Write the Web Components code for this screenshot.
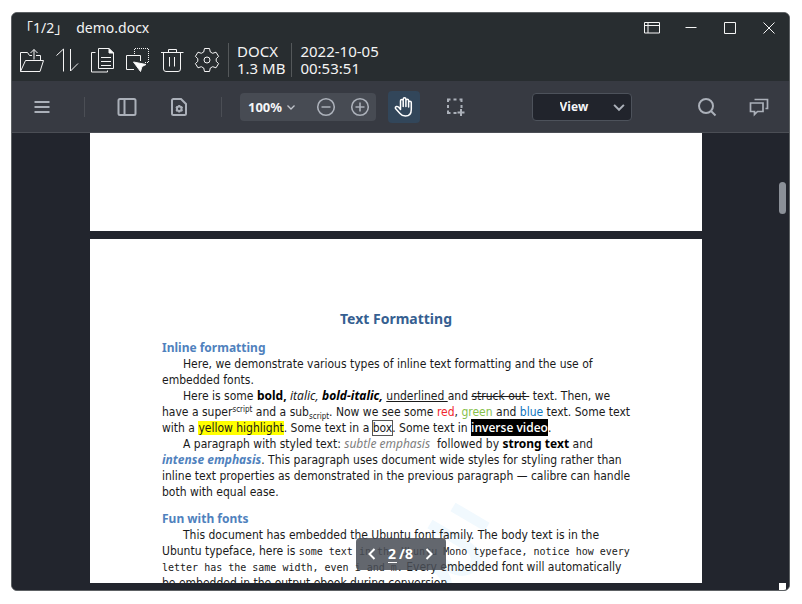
<!DOCTYPE html>
<html lang="en">
<head>
<meta charset="utf-8">
<title>demo.docx</title>
<style>
html, body { margin: 0; height: 100%; background: #fff; }
body { font-family: "Noto Sans", "Noto Sans CJK JP", sans-serif; }
</style>
</head>
<body>
<viewer-window></viewer-window>

<script>
const define = (name, html) => {
  const template = document.createElement('template');
  template.innerHTML = html;
  customElements.define(name, class extends HTMLElement {
    constructor() {
      super();
      this.attachShadow({ mode: 'open' }).append(template.content.cloneNode(true));
    }
  });
};

const ICONS = {
  open: [26, '<path d="M1.5 24.5V5.500h7l2 3h2.500M17 8.500h4.500v5M1.500 24.500h19.500L24.500 13.500H6.500Z M15 12.500V2.500M11.500 6L15 2.500L18.500 6"/>'],
  sort: [26, '<path d="M2.500 8.500L9.500 2V24.500M16.500 2V24L24 16.500"/>'],
  copy: [26, '<path d="M9.500 1.500H20L24.500 6V21.500H9.500ZM12 10.500h10M12 14.500h10M12 18.500h10M6.500 5.500H2.500V25H18.500V23.500"/><path d="M20 1.500V6H24.500Z" fill="#fff"/>'],
  move: [26, '<path d="M10.500 7V1.500H24.500V15.500H20" stroke-dasharray="1 1"/><path d="M10 22.500H2.500V8.500H16.500V14"/><path d="M9.500 15L22 17.500L18 19.500L16.500 24.500Z" fill="#fff"/>'],
  trash: [26, '<path d="M2 5.500H24.500M9.500 5.500V2.500H17.500V5.500M4.500 5.500V22Q4.500 24.500 7 24.500H19Q21.500 24.500 21.500 22V5.500M10.500 10V19.500M15.500 10V19.500"/>'],
  settings: [26, '<circle cx="13" cy="13" r="3"/><path d="M10.500 1.500h5l.8 3.500 2.400 1.300 3.300-1.100 2.600 4.200-2.400 2.300v2.600l2.400 2.300-2.600 4.200-3.300-1.100-2.400 1.300-.8 3.500h-5l-.8-3.500-2.400-1.300L4 20.800l-2.600-4.200 2.400-2.300v-2.600L1.400 9.400 4 5.200l3.300 1.100L9.700 5Z"/>'],
  layout: [16, '<path d="M.5 2.500h15v10.500H.5ZM.5 5.500h15M4 2.500v10.500"/>'],
  minimize: [16, '<path d="M2.500 7.500h11"/>'],
  maximize: [16, '<path d="M2.500 2.500h11v11h-11Z"/>'],
  close: [16, '<path d="M2.500 2.500L13.500 13.500M13.500 2.500L2.500 13.500"/>'],
  menu: [20, '<path d="M2.500 5h15M2.500 10h15M2.500 15h15"/>'],
  panel: [20, '<rect x="1.500" y="2" width="17" height="16" rx="1.500"/><path d="M7.500 2v16"/>'],
  page: [20, '<path d="M3 3.500Q3 2 4.500 2H12L17 7V16.500Q17 18 15.500 18H4.500Q3 18 3 16.500Z"/><circle cx="10.200" cy="11.800" r="2.300"/><path d="M10.200 8v2M10.200 13.500v2M7 9.900l1.500 1M12 12.800l1.500 1M7 13.800l1.500-1M12 10.900l1.500-1"/>'],
  out: [20, '<g stroke-width="1.600"><circle cx="10" cy="10" r="8.300"/><path d="M5.500 10h9"/></g>'],
  in: [20, '<g stroke-width="1.600"><circle cx="10" cy="10" r="8.300"/><path d="M5.500 10h9M10 5.500v9"/></g>'],
  pan: [20, '<path stroke-width="1.500" stroke-linejoin="round" stroke-linecap="round" d="M6.500 12.500V3.800a1.300 1.300 0 0 1 2.700 0V9.500M9.200 3V2.200a1.350 1.350 0 0 1 2.700 0V9.500M11.900 3.500a1.350 1.350 0 0 1 2.700 0V10M14.600 5.500a1.350 1.350 0 0 1 2.700 0V12.500Q17.300 19 11.500 19Q8 19 6 16.500L1.500 11.600Q1 9.800 2.500 9.500Q3.500 9.300 4.500 10L6.500 12.500"/>'],
  select: [20, '<path d="M2 5V2.500H4.500M7.500 2.500h3M13.500 2.500H15.500V5M15.500 8v3M2 8v3M2 13.500V16H4.500M7.500 16h3M11.500 15.500h7M15 12v7"/>'],
  search: [20, '<circle cx="9" cy="9" r="7"/><path d="M14 14L18.500 18.500"/>'],
  comments: [20, '<path stroke-width="1.700" d="M1.500 6h12.500v8.500H8.500L5.500 17.500V14.500H1.500ZM5.500 2.500H18.500V11.500H16.500"/>'],
  down: [10, '<path d="M1.500 3.500L5 7L8.500 3.500"/>'],
  prev: [12, '<path d="M8.500 1L3.500 6L8.500 11"/>'],
  next: [12, '<path d="M3.500 1L8.500 6L3.500 11"/>']
};

customElements.define('line-icon', class extends HTMLElement {
  connectedCallback() {
    const [size, body] = ICONS[this.getAttribute('name')];
    const root = this.attachShadow({ mode: 'open' });
    root.innerHTML = `<style>
      :host { display: block; width: var(--icon, ${size}px); height: var(--icon, ${size}px); }
      svg { display: block; width: 100%; height: 100%; fill: none; stroke: currentColor; stroke-width: var(--stroke, 1); }
    </style><svg viewBox="0 0 ${size} ${size}" aria-hidden="true">${body}</svg>`;
  }
});

customElements.define('icon-button', class extends HTMLElement {
  connectedCallback() {
    const root = this.attachShadow({ mode: 'open' });
    root.innerHTML = `<style>
      :host { display: block; color: inherit; }
      button { display: grid; place-items: center; width: var(--button, 32px); height: var(--button, 32px);
        border: 0; border-radius: 4px; padding: 0; background: var(--face, transparent); color: inherit; }
    </style><button type="button" aria-label="${this.getAttribute('label')}"><line-icon name="${this.getAttribute('icon')}"></line-icon></button>`;
  }
});

define('title-area', `
<style>
  :host { display: block; padding: 4px 0 0 7px; background: #282d30; color: #f4f4f4; }
  header { display: flex; align-items: center; justify-content: space-between; height: 22px; padding-right: 4px; }
  h1 { display: flex; gap: 8px; margin: 0; font-size: 14px; font-weight: 400; line-height: 20px; }
  .window { display: flex; gap: 7px; --button: 32px; }
  .tools { display: flex; align-items: center; height: 42px; }
  .icons { display: flex; gap: 9px; --button: 26px; }
  .info { margin: 0 0 0 6px; padding-left: 8px; border-left: 1px solid #54585a; font-size: 15px; line-height: 17px; white-space: nowrap; }
  .info:first-of-type { margin-left: 8px; }
</style>
<header>
  <h1><span>「1/2」</span><span>demo.docx</span></h1>
  <div class="window">
    <icon-button icon="layout" label="Layout"></icon-button>
    <icon-button icon="minimize" label="Minimize"></icon-button>
    <icon-button icon="maximize" label="Maximize"></icon-button>
    <icon-button icon="close" label="Close"></icon-button>
  </div>
</header>
<div class="tools">
  <div class="icons">
    <icon-button icon="open" label="Open"></icon-button>
    <icon-button icon="sort" label="Sort"></icon-button>
    <icon-button icon="copy" label="Copy"></icon-button>
    <icon-button icon="move" label="Move"></icon-button>
    <icon-button icon="trash" label="Delete"></icon-button>
    <icon-button icon="settings" label="Settings"></icon-button>
  </div>
  <p class="info">DOCX<br>1.3 MB</p>
  <p class="info">2022-10-05<br>00:53:51</p>
</div>`);

define('tool-bar', `
<style>
  :host { display: flex; align-items: center; justify-content: space-between; height: 51px; padding: 0 14px; border-bottom: 1px solid #4b4e55;
    background: #373a42; color: #abb0b9; --stroke: 2; }
  hr { width: 1px; height: 20px; margin: 0; border: 0; background: #4b4e55; }
  .start, .end { display: flex; align-items: center; }
  .end { gap: 20px; }
  .start > hr:first-of-type { margin: 0 26px; }
  .start > hr:last-of-type { margin: 0 18px 0 26px; }
  .start > icon-button + icon-button { margin-left: 20px; }
  .zoom { display: flex; align-items: center; gap: 2px; height: 28px; border-radius: 4px; background: #474b53; }
  .zoom button { display: flex; align-items: center; gap: 4px; height: 28px; border: 0; padding: 0 12px 0 8px;
    background: none; color: #f5f6f8; font: 700 13px "Noto Sans", sans-serif; --stroke: 1.3; }
  .zoom line-icon { color: #c0c4cb; }
  .pan { margin-left: 12px; color: #fff; --face: #32465a; }
  .mode { display: grid; align-items: center; }
  select { appearance: none; grid-area: 1/1; width: 100px; height: 28px; border: 1px solid #4d525b; border-radius: 4px;
    padding: 0 0 0 27px; background: #21242c; color: #f5f6f8; font: 700 12px "Open Sans", sans-serif; }
  .mode line-icon { grid-area: 1/1; justify-self: end; margin-right: 6px; pointer-events: none; --icon: 14px; --stroke: 1.4; }
</style>
<div class="start">
  <icon-button icon="menu" label="Menu"></icon-button><hr>
  <icon-button icon="panel" label="Side panel"></icon-button>
  <icon-button icon="page" label="View settings"></icon-button><hr>
  <div class="zoom">
    <button type="button">100%<line-icon name="down"></line-icon></button>
    <icon-button icon="out" label="Zoom out"></icon-button>
    <icon-button icon="in" label="Zoom in"></icon-button>
  </div>
  <icon-button class="pan" icon="pan" label="Pan"></icon-button>
  <icon-button icon="select" label="Select area"></icon-button>
</div>
<label class="mode"><select aria-label="Mode"><option>View</option></select><line-icon name="down"></line-icon></label>
<div class="end">
  <icon-button icon="search" label="Search"></icon-button>
  <icon-button icon="comments" label="Comments"></icon-button>
</div>`);

define('doc-page', `
<style>
  :host { display: block; position: relative; box-sizing: border-box; width: 100%; max-width: 612px; padding: 0 72px; background: #fff; }
</style><slot></slot>`);

define('doc-text', `
<style>
  :host { display: block; padding-top: 72px; color: #1a1a1a; font: 12px/16px "DejaVu Sans Condensed", "DejaVu Sans", sans-serif; white-space: nowrap; }
  h1 { margin: 0 0 12px; color: #365f91; font: 700 14px/16px "Noto Sans", sans-serif; text-align: center; }
  h2 { margin: 0; color: #4f81bd; font: 700 12px/17px "Noto Sans", sans-serif; }
  p { margin: 0; text-indent: 21px; }
  p + h2 { margin-top: 10px; }
  b { color: #000; }
  sup, sub { font-size: 8px; line-height: 0; }
  sup { vertical-align: 4px; } sub { vertical-align: -3px; }
  .red { color: #f0282d; } .green { color: #86c14c; } .blue { color: #0f75bd; }
  mark { background: #ff0; color: inherit; }
  .box { outline: 1px solid #555; }
  b, i { font-family: "Noto Sans", sans-serif; font-size: 12px; line-height: 0; }
  b.inverse { background: #000; color: #fff; font-family: "Open Sans", sans-serif; font-weight: 600; }
  .subtle { color: #808080; }
  b.intense { color: #4f81bd; }
  code { font: 10px/0 "DejaVu Sans Mono", monospace; }
</style>
<h1>Text Formatting</h1>
<h2>Inline formatting</h2>
<p>Here, we demonstrate various types of inline text formatting and the use of<br>embedded fonts.</p>
<p>Here is some <b>bold,</b> <i>italic,</i> <b><i>bold-italic,</i></b> <u>underlined </u>and <s>struck out&nbsp;</s> text. Then, we<br>have a super<sup>script</sup> and a sub<sub>script</sub>. Now we see some <span class="red">red</span>, <span class="green">green</span> and <span class="blue">blue</span> text. Some text<br>with a <mark>yellow highlight</mark>. Some text in a <span class="box">box</span>. Some text in <b class="inverse">inverse video</b>.</p>
<p>A paragraph with styled text: <i class="subtle">subtle emphasis</i>&nbsp; followed by <b>strong text</b> and<br><b class="intense"><i>intense emphasis</i></b>. This paragraph uses document wide styles for styling rather than<br>inline text properties as demonstrated in the previous paragraph — calibre can handle<br>both with equal ease.</p>
<h2>Fun with fonts</h2>
<p>This document has embedded the Ubuntu font family. The body text is in the<br>Ubuntu typeface, here is <code>some text in the Ubuntu Mono typeface, notice how every</code><br><code>letter has the same width, even i and m.</code> Every embedded font will automatically<br>be embedded in the output ebook during conversion.</p>`);

define('page-pager', `
<style>
  :host { display: flex; align-items: center; justify-content: space-between; box-sizing: border-box; width: 90px; height: 32px; padding: 0 10px;
    border-radius: 4px; background: rgba(73, 78, 86, .86); color: #fff; --button: 12px; --stroke: 2; }
  label { display: flex; align-items: center; font: 700 14px/18px "Noto Sans", sans-serif; gap: 2px; }
  input { width: 9px; height: 16px; border: 0; border-bottom: 1px solid #fff; padding: 0; background: none; color: inherit; font: inherit; }
</style>
<icon-button icon="prev" label="Previous page"></icon-button>
<label><input value="2" aria-label="Page">/8</label>
<icon-button icon="next" label="Next page"></icon-button>`);

define('doc-view', `
<style>
  :host { display: flex; flex: 1; min-height: 0; position: relative; padding-bottom: 7px; background: #22252d; }
  .pages { display: flex; flex: 1; flex-direction: column; align-items: center; gap: 8px; overflow: hidden; padding-left: 7px; }
  .before { flex: none; height: 98px; }
  .current { flex: 1; min-height: 0; overflow: hidden; }
  .rail { width: 16px; padding-top: 49px; }
  .thumb { width: 7px; height: 32px; margin-left: 6px; border-radius: 4px; background: #8b9098; }
  svg { position: absolute; left: 300px; top: 254px; width: 110px; height: 100px; fill: none; stroke: #f1f9fe; stroke-width: 10; }
  doc-text { position: relative; }
  page-pager { position: absolute; left: 50%; bottom: 20px; transform: translateX(-50%); }
  .grip { position: absolute; right: 3px; bottom: 0; width: 7px; height: 7px; background: #fff; }
</style>
<div class="pages">
  <doc-page class="before"></doc-page>
  <doc-page class="current">
    <svg viewBox="0 0 110 100" aria-hidden="true"><path d="M63 14L97 34M40 31L77 53Q90 62 84 72Q76 82 61 75L31 57M20 77Q30 64 46 75Q62 86 54 100"/></svg>
    <doc-text></doc-text>
  </doc-page>
</div>
<div class="rail"><div class="thumb"></div></div>
<page-pager></page-pager>
<div class="grip"></div>`);

define('viewer-window', `
<style>
  :host { display: block; box-sizing: border-box; height: 100vh; padding: 12px 12px 13px 11px; }
  main { display: flex; flex-direction: column; box-sizing: border-box; height: 100%; overflow: hidden;
    border: 1px solid #5d6164; border-radius: 6px; background: #22252d; }
</style>
<main><title-area></title-area><tool-bar></tool-bar><doc-view></doc-view></main>`);
</script>
</body>
</html>
